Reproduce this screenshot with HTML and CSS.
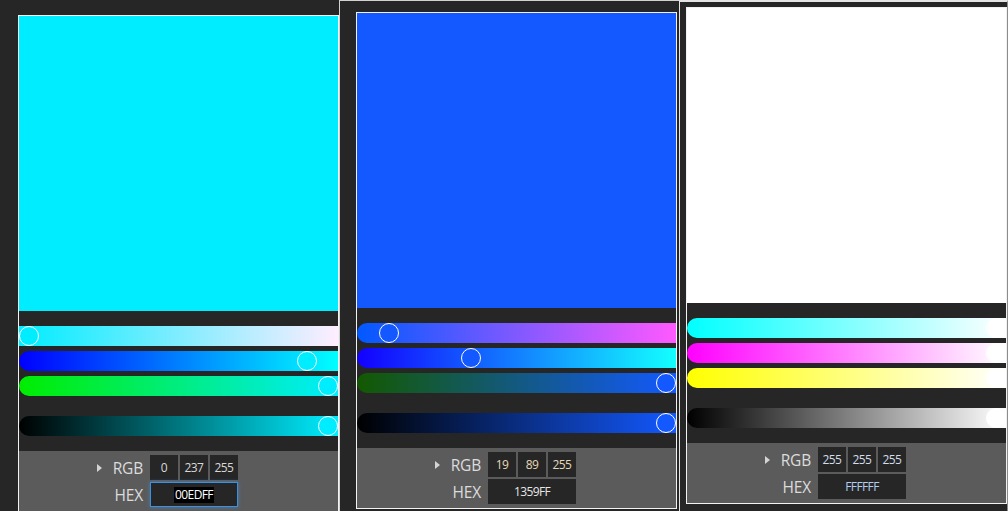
FILE: index.html
```html
<!DOCTYPE html>
<html lang="en">
<head>
<meta charset="utf-8">
<title>Color pickers</title>
<link rel="stylesheet" href="styles.css">
</head>
<body>
<div class="screen">
  <section class="shot shot-a">
    <div class="picker p-cyan">
      <div class="swatch"></div>
      <div class="sliders">
        <div class="track r square"><span class="thumb" style="--v:0"></span></div>
        <div class="track g"><span class="thumb" style="--v:0.929"></span></div>
        <div class="track b"><span class="thumb" style="--v:1"></span></div>
        <div class="track v"><span class="thumb" style="--v:1"></span></div>
      </div>
      <div class="controls">
        <div class="label"><span class="caret"></span>RGB</div>
        <div class="fields">
          <div class="field">0</div>
          <div class="field">237</div>
          <div class="field">255</div>
        </div>
        <div class="label">HEX</div>
        <div class="field hex focus"><span class="sel">00EDFF</span></div>
      </div>
    </div>
  </section>

  <section class="shot shot-b">
    <div class="picker p-blue">
      <div class="swatch"></div>
      <div class="sliders">
        <div class="track r"><span class="thumb" style="--v:0.0745"></span></div>
        <div class="track g"><span class="thumb" style="--v:0.349"></span></div>
        <div class="track b"><span class="thumb" style="--v:1"></span></div>
        <div class="track v"><span class="thumb" style="--v:1"></span></div>
      </div>
      <div class="controls">
        <div class="label"><span class="caret"></span>RGB</div>
        <div class="fields">
          <div class="field">19</div>
          <div class="field">89</div>
          <div class="field">255</div>
        </div>
        <div class="label">HEX</div>
        <div class="field hex">1359FF</div>
      </div>
    </div>
  </section>

  <section class="shot shot-c">
    <div class="picker p-white">
      <div class="swatch"></div>
      <div class="sliders">
        <div class="track r"><span class="thumb" style="--v:1"></span></div>
        <div class="track g"><span class="thumb" style="--v:1"></span></div>
        <div class="track b"><span class="thumb" style="--v:1"></span></div>
        <div class="track v"><span class="thumb" style="--v:1"></span></div>
      </div>
      <div class="controls">
        <div class="label"><span class="caret"></span>RGB</div>
        <div class="fields">
          <div class="field">255</div>
          <div class="field">255</div>
          <div class="field">255</div>
        </div>
        <div class="label">HEX</div>
        <div class="field hex">FFFFFF</div>
      </div>
    </div>
  </section>
</div>
</body>
</html>
```

FILE: styles.css
```css
html, body {
  margin: 0;
  padding: 0;
}

body {
  background: #262626;
  font-family: "Open Sans", "Noto Sans", sans-serif;
  overflow: hidden;
}

.screen {
  display: flex;
  width: 1008px;
  height: 511px;
  overflow: hidden;
}

.shot {
  box-sizing: border-box;
  height: 511px;
  flex: none;
  background: #262626;
}

.shot-a {
  width: 339px;
  padding: 15px 0 0 18px;
}

.shot-b {
  width: 340px;
  border-left: 1px solid #d2d2d2;
  border-top: 1px solid #d2d2d2;
  padding: 11px 0 0 16px;
}

.shot-c {
  width: 329px;
  border-left: 1px solid #e4e4e4;
  border-top: 2px solid #e4e4e4;
  border-right: 1px solid #8c8c8c;
  padding: 5px 0 0 6px;
}

.picker {
  width: 321px;
  box-sizing: border-box;
  border: 1px solid #f2f2f2;
  background: #262626;
}

.swatch {
  height: 295px;
  background: var(--c);
}

.sliders {
  display: flex;
  flex-direction: column;
  gap: 5px;
  padding: 15px 0;
}

.track {
  position: relative;
  height: 20px;
  border-radius: 10px 0 0 10px;
}

.track.square {
  border-radius: 0;
}

.track.v {
  margin-top: 15px;
}

.thumb {
  position: absolute;
  top: 0;
  left: calc(var(--v) * (100% - 20px));
  width: 20px;
  height: 20px;
  box-sizing: border-box;
  border: 1.5px solid #ffffff;
  border-radius: 50%;
  background: var(--c);
}

/* panel colours */
.p-cyan { --c: #00edff; }
.p-cyan .r { background: linear-gradient(to right, rgb(0,237,255), rgb(255,237,255)); }
.p-cyan .g { background: linear-gradient(to right, rgb(0,0,255), rgb(0,255,255)); }
.p-cyan .b { background: linear-gradient(to right, rgb(0,237,0), rgb(0,237,255)); }
.p-cyan .v { background: linear-gradient(to right, #000000, #00edff); }

.p-blue { --c: #1359ff; }
.p-blue .r { background: linear-gradient(to right, rgb(0,89,255), rgb(255,89,255)); }
.p-blue .g { background: linear-gradient(to right, rgb(19,0,255), rgb(19,255,255)); }
.p-blue .b { background: linear-gradient(to right, rgb(19,89,0), rgb(19,89,255)); }
.p-blue .v { background: linear-gradient(to right, #000000, #1359ff); }

.p-white { --c: #ffffff; }
.p-white .r { background: linear-gradient(to right, rgb(0,255,255), rgb(255,255,255)); }
.p-white .g { background: linear-gradient(to right, rgb(255,0,255), rgb(255,255,255)); }
.p-white .b { background: linear-gradient(to right, rgb(255,255,0), rgb(255,255,255)); }
.p-white .v { background: linear-gradient(to right, #000000, #ffffff); }

/* controls */
.controls {
  height: 60px;
  box-sizing: border-box;
  background: #5b5b5b;
  padding-top: 4px;
  display: grid;
  grid-template-columns: 124px auto;
  column-gap: 7px;
  row-gap: 2px;
  align-content: start;
  justify-content: start;
}

.label {
  display: flex;
  align-items: center;
  justify-content: flex-end;
  height: 25px;
  font-size: 15.5px;
  letter-spacing: -0.2px;
  color: #dcdcdc;
}

.caret {
  width: 0;
  height: 0;
  border-left: 5px solid #d4d4d4;
  border-top: 4px solid transparent;
  border-bottom: 4px solid transparent;
  margin-right: 11px;
}

.fields {
  display: flex;
  gap: 2px;
}

.field {
  width: 28px;
  height: 25px;
  box-sizing: border-box;
  background: #262626;
  display: flex;
  align-items: center;
  justify-content: center;
  font-size: 12px;
  letter-spacing: -0.6px;
  color: #d8d8d8;
}

.field.hex {
  width: 88px;
}

.field.focus {
  border: 1px solid #3d8fe0;
  box-shadow: 0 0 4px rgba(61, 143, 224, 0.65);
}

.sel {
  background: #000000;
  color: #ffffff;
  padding: 1px;
  line-height: 14px;
}

.p-blue .field { color: #e4d9b6; }
.p-blue .field.hex { color: #e6e6e6; }
.p-white .field { color: #d2dcea; }
.p-white .field.hex { color: #b4cdee; }
```
